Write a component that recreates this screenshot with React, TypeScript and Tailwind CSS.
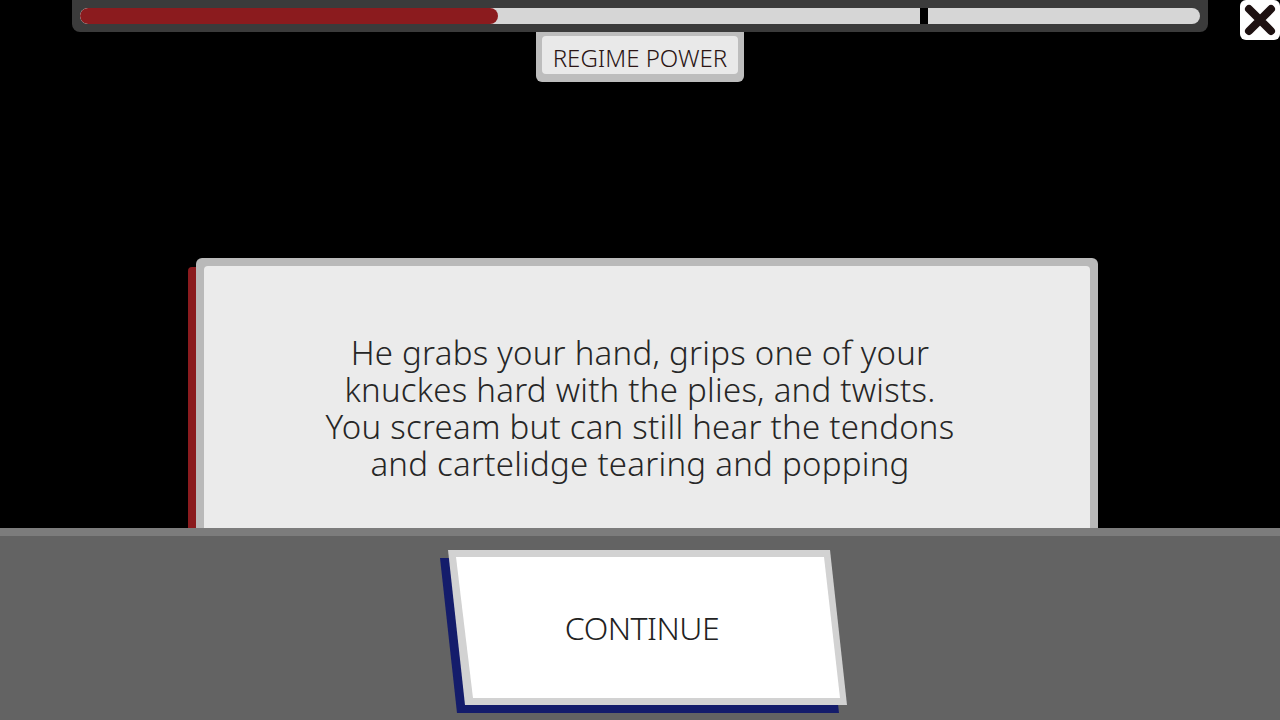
import React from 'react'

const story = [
  'He grabs your hand, grips one of your',
  'knuckes hard with the plies, and twists.',
  'You scream but can still hear the tendons',
  'and cartelidge tearing and popping',
]

export default function App() {
  const power = 0.373
  const threshold = 0.75

  return (
    <div className="w-[1280px] h-[720px] bg-black flex flex-col overflow-hidden font-['Noto_Sans',sans-serif]">
      {/* scene */}
      <div className="relative h-[528px] shrink-0 flex flex-col items-center overflow-hidden">
        <div className="shrink-0 w-[1136px] h-[32px] bg-[#3b3b3b] rounded-b-[8px] px-[8px] pt-[8px]">
          <div className="relative h-[16px] bg-[#d6d6d6] rounded-full overflow-hidden">
            <div className="h-full bg-[#8b1b1e] rounded-full" style={{ width: `${power * 100}%` }} />
            <div className="absolute top-0 h-full w-[8px] bg-black" style={{ left: `${threshold * 1120}px` }} />
          </div>
        </div>

        <div className="shrink-0 w-[208px] h-[50px] bg-[#bdbdbd] rounded-b-[6px] px-[6px] pt-[4px] pb-[8px]">
          <div className="h-full bg-[#e9e9e9] rounded-[4px] flex items-center justify-center pt-[5px]">
            <span className="text-[24px] leading-none font-light text-[#2a1414]">REGIME POWER</span>
          </div>
        </div>

        <button className="absolute top-0 right-0 w-[40px] h-[40px] bg-white rounded-[6px] flex items-center justify-center">
          <svg width="34" height="34" viewBox="0 0 34 34">
            <path d="M6 6 L28 28 M28 6 L6 28" stroke="#1e1111" strokeWidth="8" strokeLinecap="round" />
          </svg>
        </button>

        {/* dialog card */}
        <div className="shrink-0 mt-[176px] ml-[6px] flex w-[910px] h-[300px]">
          <div className="w-[8px] mt-[9px] bg-[#8b1b1e] rounded-tl-[4px]" />
          <div className="flex-1 bg-[#b9b9b9] rounded-t-[6px] pt-[8px] px-[8px]">
            <div className="h-full bg-[#ebebeb] rounded-t-[4px] pt-[68px] pr-[14px] flex flex-col items-center">
              <p className="text-[33px] leading-[37px] font-light text-[#262626] tracking-[0.25px] whitespace-nowrap text-center">
                {story.map((line, i) => (
                  <React.Fragment key={line}>
                    {i > 0 && <br />}
                    {line}
                  </React.Fragment>
                ))}
              </p>
            </div>
          </div>
        </div>
      </div>

      {/* action panel */}
      <div className="flex-1 bg-[#636363] border-t-[8px] border-[#7c7c7c] relative">
        <div className="absolute left-[440px] top-[14px] w-[408px] h-[164px]">
          <div className="absolute inset-0 bg-[#141c6b] [clip-path:polygon(0px_8px,382px_8px,399px_163px,17px_163px)]" />
          <div className="absolute inset-0 bg-[#d2d2d2] [clip-path:polygon(8px_0px,390px_0px,407px_155px,25px_155px)]" />
          <div className="absolute inset-0 bg-white [clip-path:polygon(16px_7px,384px_7px,400px_148px,33px_148px)]" />
          <div className="absolute inset-0 flex items-center justify-center pr-[4px] pb-[8px]">
            <span className="text-[32px] leading-none font-light tracking-[-0.5px] text-[#222]">CONTINUE</span>
          </div>
        </div>
      </div>
    </div>
  )
}
